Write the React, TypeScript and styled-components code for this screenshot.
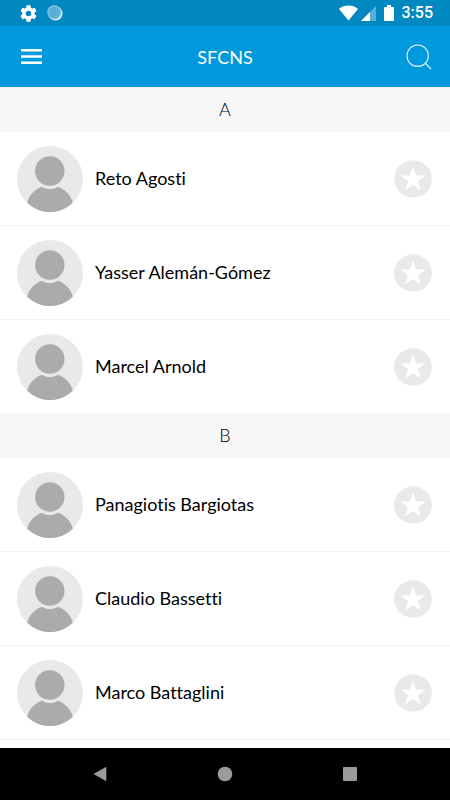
import React from "react";
import styled, { createGlobalStyle } from "styled-components";

const GlobalStyle = createGlobalStyle`
  * { box-sizing: border-box; }
  body { margin: 0; background: #fff; }
  button { border: 0; padding: 0; margin: 0; background: none; cursor: pointer; font: inherit; }
  svg { display: block; }
`;

const Screen = styled.div`
  display: flex;
  flex-direction: column;
  height: 100vh;
  overflow: hidden;
  background: #fff;
  color: #000;
  font-family: Lato, "Liberation Sans", sans-serif;
  font-variant-ligatures: none;
`;

const StatusBar = styled.div`
  flex: none;
  display: flex;
  align-items: center;
  justify-content: space-between;
  height: 26px;
  padding: 0 17px 0 20px;
  background: #0288c0;
  color: #fff;
`;

const StatusGroup = styled.div<{ $gap: number }>`
  display: flex;
  align-items: center;
  gap: ${(p) => p.$gap}px;
`;

const Clock = styled.time`
  font: 500 16px/26px Roboto, sans-serif;
`;

const Header = styled.header`
  flex: none;
  display: grid;
  grid-template-columns: 28px 1fr 28px;
  align-items: center;
  height: 61px;
  padding: 0 17px;
  background: #0099dd;
  color: #fff;
`;

const IconButton = styled.button`
  display: grid;
  place-items: center;
  width: 28px;
  height: 44px;
  color: #fff;
`;

const Title = styled.h1`
  margin: 0;
  text-align: center;
  font-size: 18px;
  font-weight: 400;
  line-height: 24px;
`;

const Directory = styled.main`
  flex: 1;
  min-height: 0;
  overflow: hidden;
`;

const SectionTitle = styled.h2`
  margin: 0;
  background: #f6f6f6;
  text-align: center;
  font-size: 18px;
  font-weight: 300;
  line-height: 45px;
`;

const People = styled.ul<{ $continues: boolean }>`
  margin: 0;
  padding: 0;
  list-style: none;
  border-bottom: ${(p) => (p.$continues ? "1px solid #f1f1f1" : "0")};
`;

const Person = styled.li`
  display: flex;
  align-items: center;
  gap: 12px;
  padding: 14px 18px 13px 17px;

  & + & {
    border-top: 1px solid #f1f1f1;
  }
`;

const Name = styled.span`
  flex: 1;
  padding-bottom: 2px;
  font-size: 18px;
  line-height: 24px;
`;

const StarButton = styled.button`
  width: 38px;
  height: 38px;
`;

const NavBar = styled.nav`
  flex: none;
  display: flex;
  align-items: center;
  justify-content: space-around;
  height: 52px;
  padding: 0 38px;
  background: #000;
`;

const NavButton = styled.button`
  display: grid;
  place-items: center;
  width: 48px;
  height: 48px;
`;

const Gear = () => (
  <svg width="17" height="17" viewBox="2 2 20 20" fill="#fff" aria-hidden="true">
    <path d="M19.14 12.94c.04-.3.06-.61.06-.94s-.02-.64-.07-.94l2.03-1.58a.49.49 0 0 0 .12-.61l-1.92-3.32a.49.49 0 0 0-.59-.22l-2.39.96a7 7 0 0 0-1.62-.94l-.36-2.54A.48.48 0 0 0 13.92 2.4h-3.84a.47.47 0 0 0-.47.41l-.36 2.54c-.59.24-1.13.57-1.62.94l-2.39-.96a.48.48 0 0 0-.59.22L2.74 8.87a.47.47 0 0 0 .12.61l2.03 1.58c-.05.3-.09.63-.09.94s.02.64.07.94l-2.03 1.58a.49.49 0 0 0-.12.61l1.92 3.32c.12.22.37.29.59.22l2.39-.96c.5.38 1.03.7 1.62.94l.36 2.54c.05.24.24.41.48.41h3.84c.24 0 .44-.17.47-.41l.36-2.54a6.8 6.8 0 0 0 1.62-.94l2.39.96c.22.08.47 0 .59-.22l1.92-3.32a.47.47 0 0 0-.12-.61zM12 15.2a3.2 3.2 0 1 1 0-6.4 3.2 3.2 0 0 1 0 6.4z" />
  </svg>
);

const Spinner = () => (
  <svg width="16" height="16" viewBox="0 0 16 16" aria-hidden="true">
    <circle cx="8.3" cy="8.3" r="7.2" fill="#fff" />
    <circle cx="7.3" cy="7.3" r="7.2" fill="#58b0d8" />
    <circle cx="7.3" cy="7.3" r="6.1" fill="none" stroke="#a4d5ea" strokeWidth="1.2" strokeDasharray="1 1" />
  </svg>
);

const Wifi = () => (
  <svg width="19" height="16" viewBox="0 0 19 16" fill="#fff" aria-hidden="true">
    <path d="M0 3.9C2.6 1.7 5.9.5 9.5.5S16.400 1.700 19 3.900L9.500 15.500z" />
  </svg>
);

const Signal = () => (
  <svg width="15" height="15" viewBox="0 0 15 15" aria-hidden="true">
    <path d="M0 15 15 0v15z" fill="#58b0d8" />
    <path d="M0 15 9 6v9z" fill="#fff" />
  </svg>
);

const Battery = () => (
  <svg width="10" height="16" viewBox="0 0 10 16" fill="#fff" aria-hidden="true">
    <path d="M3 0h4v2h2a1 1 0 0 1 1 1v12a1 1 0 0 1-1 1H1a1 1 0 0 1-1-1V3a1 1 0 0 1 1-1h2z" />
  </svg>
);

const MenuIcon = () => (
  <svg width="21" height="15" viewBox="0 0 21 15" fill="#fff" aria-hidden="true">
    <path d="M0 0h21v2.600H0zM0 6.200h21v2.600H0zM0 12.400h21V15H0z" />
  </svg>
);

const SearchIcon = () => (
  <svg width="26" height="26" viewBox="0 0 26 26" fill="none" stroke="#e4f4fc" strokeWidth="1.1" aria-hidden="true">
    <circle cx="11.700" cy="11.700" r="10.700" />
    <path d="M19 19l6 6" />
  </svg>
);

const Avatar = () => (
  <svg width="66" height="66" viewBox="0 0 66 66" aria-hidden="true">
    <circle cx="33" cy="33" r="33" fill="#e9e9eb" />
    <circle cx="32.800" cy="25" r="14.700" fill="#ababad" />
    <path d="M10.200 56.700C12.300 49 17.500 43.200 25 40.700c4.500 3.100 11.300 3.100 15.800 0C48.300 43.200 53.700 49 55.800 56.700 49.500 62.700 41.500 66 33 66S16.500 62.700 10.200 56.700z" fill="#ababad" />
  </svg>
);

const Star = () => (
  <svg width="38" height="38" viewBox="0 0 38 38" aria-hidden="true">
    <circle cx="19" cy="19" r="18.800" fill="#e9e9e9" />
    <path d="M19 6.500L22.100 15.400L31.500 15.600L24 21.300L26.700 30.300L19 25L11.300 30.300L14 21.300L6.500 15.600L15.900 15.400z" fill="#fff" />
  </svg>
);

const sections = [
  { letter: "A", people: ["Reto Agosti", "Yasser Alemán-Gómez", "Marcel Arnold"], continues: false },
  { letter: "B", people: ["Panagiotis Bargiotas", "Claudio Bassetti", "Marco Battaglini"], continues: true },
];

export default function App() {
  return (
    <>
      <GlobalStyle />
      <Screen>
        <StatusBar>
          <StatusGroup $gap={10}>
            <Gear />
            <Spinner />
          </StatusGroup>
          <StatusGroup $gap={8}>
            <StatusGroup $gap={3}>
              <Wifi />
              <Signal />
            </StatusGroup>
            <Battery />
            <Clock>3:55</Clock>
          </StatusGroup>
        </StatusBar>
        <Header>
          <IconButton aria-label="Menu">
            <MenuIcon />
          </IconButton>
          <Title>SFCNS</Title>
          <IconButton aria-label="Search">
            <SearchIcon />
          </IconButton>
        </Header>
        <Directory>
          {sections.map((section) => (
            <section key={section.letter}>
              <SectionTitle>{section.letter}</SectionTitle>
              <People $continues={section.continues}>
                {section.people.map((name) => (
                  <Person key={name}>
                    <Avatar />
                    <Name>{name}</Name>
                    <StarButton aria-label={`Add ${name} to favourites`}>
                      <Star />
                    </StarButton>
                  </Person>
                ))}
              </People>
            </section>
          ))}
        </Directory>
        <NavBar>
          <NavButton aria-label="Back">
            <svg width="14" height="16" viewBox="0 0 14 16" fill="#9b9b9b" aria-hidden="true">
              <path d="M13.300.800v14.400L.500 8z" />
            </svg>
          </NavButton>
          <NavButton aria-label="Home">
            <svg width="16" height="16" viewBox="0 0 16 16" fill="#9b9b9b" aria-hidden="true">
              <circle cx="8" cy="8" r="7.300" />
            </svg>
          </NavButton>
          <NavButton aria-label="Recent apps">
            <svg width="14" height="14" viewBox="0 0 14 14" fill="#9b9b9b" aria-hidden="true">
              <rect width="14" height="14" rx="1" />
            </svg>
          </NavButton>
        </NavBar>
      </Screen>
    </>
  );
}
